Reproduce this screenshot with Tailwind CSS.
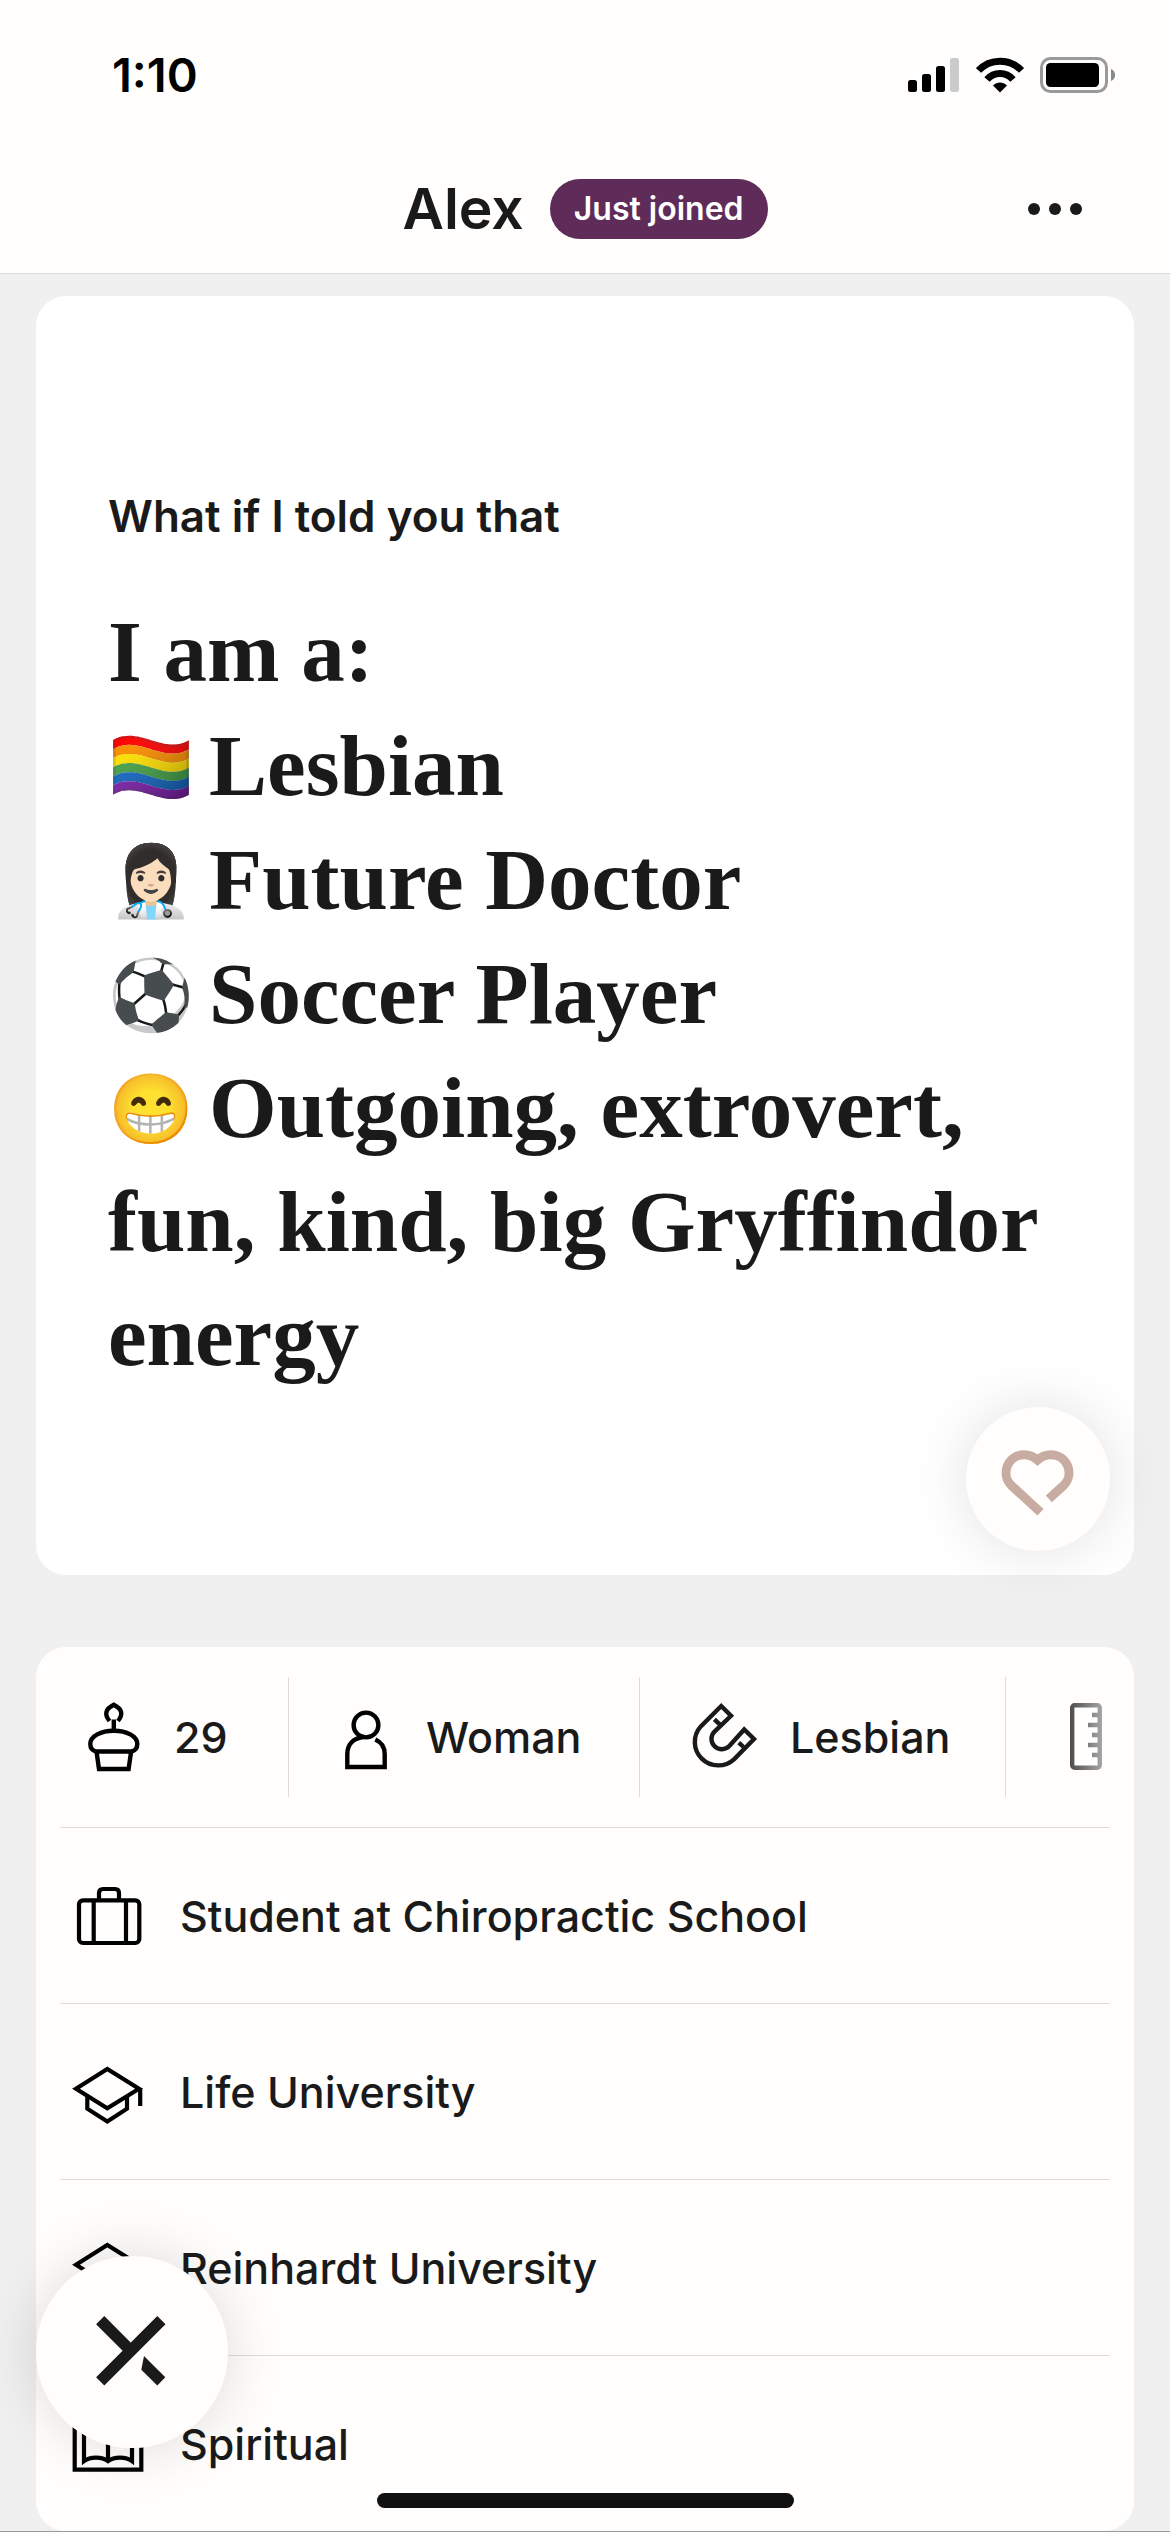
<!DOCTYPE html>
<html lang="en">
<head>
<meta charset="utf-8">
<meta name="viewport" content="width=device-width, initial-scale=1">
<title>Alex</title>
<script src="https://cdn.jsdelivr.net/npm/@tailwindcss/browser@4"></script>
</head>
<body class="flex min-h-screen flex-col border-b border-[#9b9b9b] bg-[#f0f0f0] font-['Inter',sans-serif] text-[43px] leading-[56px] font-medium text-[#1a1a1a]">

<header class="border-b border-[#dadcdc] bg-[#fffefc]">
  <!-- Status bar -->
  <div class="flex h-36 items-center justify-between pt-1.5 pr-[54px] pl-28 text-black">
    <span class="text-[47px] font-semibold">1:10</span>
    <div class="flex items-center gap-4">
      <svg class="h-9 w-[52px]" viewBox="0 0 52 36" aria-hidden="true">
        <rect x="0" y="23" width="9" height="12" rx="2.5"/>
        <rect x="14" y="17" width="9" height="18" rx="2.5"/>
        <rect x="28" y="9" width="9" height="26" rx="2.5"/>
        <rect x="42" y="1" width="9" height="34" rx="2.5" fill="#cbcbcb"/>
      </svg>
      <svg class="h-9 w-12" viewBox="0 0 48 36" aria-hidden="true">
        <g fill="none" stroke="#000" stroke-width="7">
          <path d="M2.5 13.5C14 1 34 1 45.5 13.5"/>
          <path d="M11 22.5C18 14.5 30 14.5 37 22.5"/>
        </g>
        <path d="M17 28.5C21 24.5 27 24.5 31 28.5L24 35.5Z"/>
      </svg>
      <svg class="h-9 w-[76px]" viewBox="0 0 76 36" aria-hidden="true">
        <rect x="1.5" y="1.5" width="65" height="33" rx="9" fill="none" stroke="#9a9a9a" stroke-width="3"/>
        <rect x="6" y="6" width="53" height="24" rx="4.5"/>
        <path d="M71 12C76.5 14 76.5 22 71 24Z" fill="#8a8a8a"/>
      </svg>
    </div>
  </div>
  <!-- Profile title -->
  <div class="grid h-[129px] grid-cols-[1fr_auto_1fr] items-center">
    <div></div>
    <div class="flex items-center gap-[26px]">
      <h1 class="text-[57px] leading-[64px] font-semibold">Alex</h1>
      <span class="rounded-full bg-[#5f2b59] px-6 text-[32px] leading-[60px] font-semibold text-white">Just joined</span>
    </div>
    <button type="button" aria-label="More options" class="mr-[88px] flex gap-[9px] justify-self-end">
      <span class="size-3 rounded-full bg-[#1a1a1a]"></span>
      <span class="size-3 rounded-full bg-[#1a1a1a]"></span>
      <span class="size-3 rounded-full bg-[#1a1a1a]"></span>
    </button>
  </div>
</header>

<main class="flex flex-col gap-18 px-9 pt-[22px]">
  <!-- Prompt -->
  <section class="relative rounded-[30px] bg-white px-18 pt-48 pb-[182px]">
    <h2 class="text-[44px] font-semibold">What if I told you that</h2>
    <p class="mt-[51px] font-['Liberation_Serif',serif] text-[87px] leading-[114px] font-bold">
      I am a:<br>
      <span class="inline-block w-[101px] align-[4px] text-[69px] leading-none">🏳️‍🌈</span>Lesbian<br>
      <span class="inline-block w-[101px] align-[4px] text-[69px] leading-none">👩🏻‍⚕️</span>Future Doctor<br>
      <span class="inline-block w-[101px] align-[4px] text-[69px] leading-none">⚽</span>Soccer Player<br>
      <span class="inline-block w-[101px] align-[4px] text-[69px] leading-none">😁</span>Outgoing, extrovert,<br>
      fun, kind, big Gryffindor<br>
      energy
    </p>
    <button type="button" aria-label="Like" class="absolute right-6 bottom-6 size-36 rounded-full bg-[#fffefc] shadow-[0_0_60px_rgba(0,0,0,0.12)]">
      <svg class="size-36" viewBox="0 0 144 144" fill="none" stroke="#c8aca1" stroke-width="9" aria-hidden="true">
        <path d="M74.5 105.2L45.3 78.4A18 18 0 0 1 58 47.7C63.5 47.7 67.5 49.5 71.5 53C75.5 49.5 79.5 47.7 85 47.7A18 18 0 0 1 97.7 78.4L82.8 91.8"/>
      </svg>
    </button>
  </section>

  <!-- Vitals -->
  <section class="rounded-[30px] bg-[#fffefc] px-6">
    <ul class="flex h-[181px] items-center overflow-hidden border-b border-[#dcdcdc]">
      <li class="flex h-[120px] w-[229px] shrink-0 items-center gap-6 border-r border-[#dcdcdc] pl-[18px]">
        <svg class="size-18" viewBox="0 0 72 72" fill="none" stroke="#000" stroke-width="4.4" aria-hidden="true">
          <path d="M31.5 20C26 13 27.5 8 35.8 3.8C44 8 45.5 13 40 20"/>
          <path d="M35.8 18.5V30"/>
          <path d="M18 50.5C14 49.5 12.3 47 12.3 43C12.3 35 23 29.8 35.8 29.8S59.3 35 59.3 43C59.3 47 57.6 49.5 53.6 50.5Z"/>
          <path d="M18.5 50.5L21 68H50.6L53.1 50.5"/>
        </svg>
        29
      </li>
      <li class="flex h-[120px] w-[351px] shrink-0 items-center gap-6 border-r border-[#dcdcdc] pl-[41px]">
        <svg class="size-18" viewBox="0 0 72 72" fill="none" stroke="#000" stroke-width="4.4" aria-hidden="true">
          <circle cx="36" cy="24" r="12.4"/>
          <path d="M33 36C22.5 37.5 17.3 44 17.3 53V66H54.7V53C54.7 46 52 41.5 45.3 38.5"/>
        </svg>
        Woman
      </li>
      <li class="flex h-[120px] w-[366px] shrink-0 items-center gap-[30px] border-r border-[#dcdcdc] pl-12">
        <svg class="size-18" viewBox="0 0 72 72" fill="none" stroke="#1a1a1a" stroke-width="4.4" aria-hidden="true">
          <path d="M33.2 5L43 14.8L26.3 30.8A10.3 10.3 0 0 0 41.3 45L56.2 28.5L66 38L46 58.3A23.4 23.4 0 0 1 12.8 25.4Z"/>
          <path d="M26.4 18.3L33 24.7M50.8 41.7L55.5 46"/>
        </svg>
        Lesbian
      </li>
      <li class="flex h-[120px] shrink-0 items-center pl-11">
        <svg class="size-18" viewBox="0 0 72 72" fill="none" stroke="url(#fade)" stroke-width="4.4" aria-hidden="true">
          <defs>
            <linearGradient id="fade" gradientUnits="userSpaceOnUse" x1="20" y1="0" x2="52" y2="0">
              <stop offset="0" stop-color="#4c4c4c"/>
              <stop offset="1" stop-color="#a6a6a6"/>
            </linearGradient>
          </defs>
          <rect x="22.2" y="4.3" width="27.6" height="62.4" rx="2.5"/>
          <path d="M42 14H49M38 24H49M42 34H49M38 44H49M42 54H49"/>
        </svg>
      </li>
    </ul>
    <ul class="divide-y divide-[#dcdcdc]">
      <li class="flex h-44 items-center gap-9 pl-3">
        <svg class="size-18" viewBox="0 0 72 72" fill="none" stroke="#000" stroke-width="4.2" aria-hidden="true">
          <rect x="7" y="20.3" width="60.3" height="42.7" rx="4"/>
          <path d="M27 20V13Q27 9 31 9H43Q47 9 47 13V20M21.7 20V63M54 20V63"/>
        </svg>
        Student at Chiropractic School
      </li>
      <li class="flex h-44 items-center gap-9 pl-3">
        <svg class="size-18" viewBox="0 0 72 72" fill="none" stroke="#000" stroke-width="4.2" aria-hidden="true">
          <path d="M4 32.7L35.3 12.9L67 32.7L35.3 52.3Z"/>
          <path d="M15.3 40V52.7L35.3 65.5L55 52.7V40M68.2 32V50"/>
        </svg>
        Life University
      </li>
      <li class="flex h-44 items-center gap-9 pl-3">
        <svg class="size-18" viewBox="0 0 72 72" fill="none" stroke="#000" stroke-width="4.2" aria-hidden="true">
          <path d="M4 32.7L35.3 12.9L67 32.7L35.3 52.3Z"/>
          <path d="M15.3 40V52.7L35.3 65.5L55 52.7V40M68.2 32V50"/>
        </svg>
        Reinhardt University
      </li>
      <li class="flex h-[175px] items-center gap-9 pl-3">
        <svg class="size-18" viewBox="0 0 72 72" fill="none" stroke="#000" stroke-width="4.2" aria-hidden="true">
          <path d="M12 17H2.7V61.7H69.3V17H60"/>
          <path d="M36 53V15C30 8 18 8 12 13V53C18 48.5 30 48.5 36 53C42 48.5 54 48.5 60 53V13C54 8 42 8 36 15"/>
        </svg>
        Spiritual
      </li>
    </ul>
  </section>
</main>

<!-- Floating skip button -->
<button type="button" aria-label="Skip" class="fixed bottom-21 left-9 size-48 rounded-full bg-[#fffefc] shadow-[0_0_60px_rgba(0,0,0,0.14)]">
  <svg class="size-48" viewBox="0 0 192 192" fill="none" stroke="#1a1a1a" stroke-width="11.6" aria-hidden="true">
    <path d="M125.4 64.2L64.2 125.4M64.2 64.2L92 92"/>
    <path d="M108 100L129.3 121.3L121.3 129.6L105.3 113.7Z" fill="#1a1a1a" stroke="none"/>
  </svg>
</button>

<!-- Home indicator -->
<div class="pointer-events-none fixed inset-x-0 bottom-6 flex justify-center">
  <div class="h-[15px] w-[417px] rounded-full bg-[#111111]"></div>
</div>
</body>
</html>
